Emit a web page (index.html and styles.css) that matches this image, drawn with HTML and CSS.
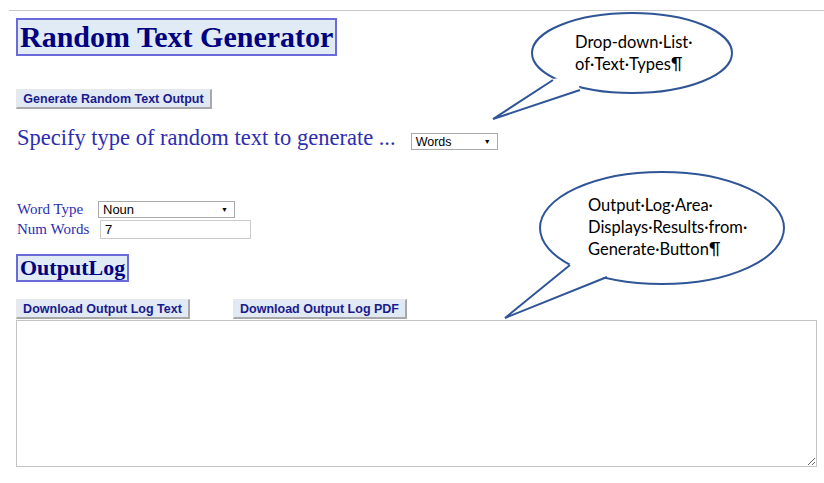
FILE: index.html
```html
<!DOCTYPE html>
<html lang="en">

<head>
    <meta charset="UTF-8">
    <title>Random Text Generator</title>
    <link rel="stylesheet" href="styles.css">
</head>

<body>
    <div class="rule"></div>

    <div class="page">
        <h1 class="title">Random Text Generator</h1>

        <div>
            <button class="btn" id="generate">Generate Random Text Output</button>
        </div>

        <div class="type-row">
            <span class="type-label">Specify type of random text to generate ...</span>
            <div class="dropdown type-select">
                <span>Words</span>
                <span class="arrow">&#9660;</span>
            </div>
        </div>

        <div class="options">
            <label>Word Type</label>
            <div class="dropdown word-select">
                <span>Noun</span>
                <span class="arrow">&#9660;</span>
            </div>
            <label>Num Words</label>
            <input class="num-input" type="text" value="7">
        </div>

        <h2 class="log-title">OutputLog</h2>

        <div class="downloads">
            <button class="btn dl-btn">Download Output Log Text</button>
            <button class="btn dl-btn">Download Output Log PDF</button>
        </div>

        <textarea class="log"></textarea>
    </div>

    <svg class="callouts" width="824" height="483" viewBox="0 0 824 483">
        <g class="bubble">
            <ellipse cx="632" cy="53" rx="100" ry="40" />
            <polygon class="tail-fill" points="553,79 493,119 580,89 575,75" />
            <polyline points="553,80 493,119 580,90" />
            <text x="575" y="48">Drop-down·List·</text>
            <text x="575" y="70">of·Text·Types¶</text>
        </g>
        <g class="bubble">
            <ellipse cx="662" cy="228" rx="122" ry="56" />
            <polygon class="tail-fill" points="570,264 505,318 607,276 600,260" />
            <polyline points="570,265 505,318 607,277" />
            <text x="588" y="211">Output·Log·Area·</text>
            <text x="588" y="233">Displays·Results·from·</text>
            <text x="588" y="255">Generate·Button¶</text>
        </g>
    </svg>
</body>
</html>
```

FILE: styles.css
```css
body {
    margin: 0;
    background: #fff;
    font-family: "Liberation Serif", serif;
    position: relative;
}

.rule {
    margin: 10px 0 0 9px;
    border-top: 1px solid #c8c8c8;
}

.page {
    padding: 0 7px 0 16px;
}

.title {
    display: inline-block;
    margin: 7px 0 0 0;
    padding: 0 2px;
    font-size: 30px;
    line-height: 34px;
    color: #000080;
    background: #e1ebf5;
    border: 2px solid #6a6ad8;
}

.btn {
    font-family: "Liberation Sans", Arial, sans-serif;
    font-weight: bold;
    font-size: 12.5px;
    color: #1a1a8c;
    background: #e0e9f4;
    border: none;
    border-left: 1px solid #e8e8e8;
    border-top: 1px solid #e8e8e8;
    border-right: 2px solid #a8a8a8;
    border-bottom: 2px solid #a8a8a8;
    height: 20px;
    padding: 0 6px;
}

#generate {
    margin-top: 33px;
    width: 196px;
}

.type-row {
    display: flex;
    align-items: flex-end;
    margin-top: 16px;
    height: 26px;
}

.type-label {
    font-size: 22.5px;
    color: #2d2db0;
    padding-left: 1px;
}

.dropdown {
    display: flex;
    justify-content: space-between;
    align-items: center;
    box-sizing: border-box;
    border: 1px solid #aaa;
    background: #fff;
    font-family: "Liberation Sans", Arial, sans-serif;
    font-size: 12.5px;
    color: #000;
    padding: 0 6px 0 4px;
}

.arrow {
    font-size: 7px;
}

.type-select {
    width: 87px;
    height: 17px;
    margin-left: 15px;
    margin-bottom: 1px;
}

.options {
    display: grid;
    grid-template-columns: 82px auto;
    align-items: center;
    row-gap: 2px;
    margin-top: 50px;
    justify-items: start;
}

.options label {
    font-size: 15px;
    color: #2d2db0;
    padding-left: 1px;
}

.word-select {
    width: 137px;
    height: 17px;
    font-size: 13px;
}

.num-input {
    box-sizing: border-box;
    width: 151px;
    height: 19px;
    margin-left: 2px;
    border: 1px solid #ccc;
    font-family: "Liberation Sans", Arial, sans-serif;
    font-size: 13px;
    padding: 0 4px;
}

.log-title {
    display: inline-block;
    margin: 15px 0 0 0;
    padding: 0 2px;
    font-size: 22px;
    line-height: 24px;
    color: #000080;
    background: #e1ebf5;
    border: 2px solid #6a6ad8;
}

.downloads {
    display: flex;
    gap: 43px;
    margin-top: 17px;
}

.dl-btn {
    width: 174px;
}

.log {
    display: block;
    box-sizing: border-box;
    width: 801px;
    height: 147px;
    margin: 1px 0 0 0;
    border: 1px solid #c4c4c4;
    resize: both;
}

.callouts {
    position: absolute;
    left: 0;
    top: 0;
    pointer-events: none;
}

.bubble ellipse,
.bubble polyline {
    fill: #fff;
    stroke: #2f5597;
    stroke-width: 2;
}

.bubble .tail-fill {
    fill: #fff;
}

.bubble polyline {
    fill: none;
    stroke-linejoin: miter;
}

.bubble text {
    font-family: Lato, "Open Sans", sans-serif;
    font-size: 16.5px;
    fill: #000;
}
```
